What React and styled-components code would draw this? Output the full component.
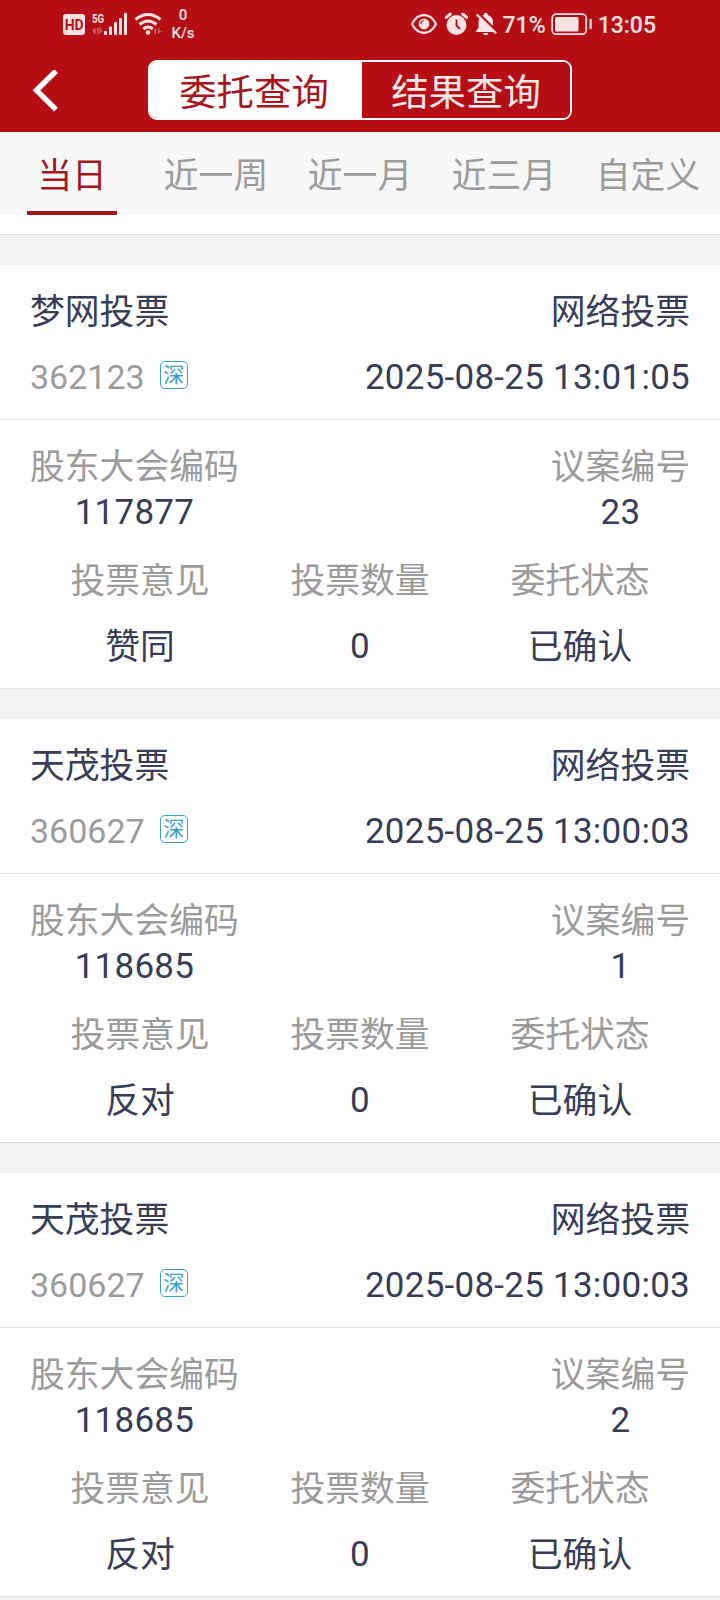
import React from 'react';
import styled, { createGlobalStyle } from 'styled-components';

const GlobalStyle = createGlobalStyle`
  * {
    box-sizing: border-box;
  }

  body {
    margin: 0;
    background: #fff;
    font-family: Roboto, 'Noto Sans CJK SC', sans-serif;
  }
`;

const Screen = styled.div`
  width: 720px;
  height: 1600px;
  overflow: hidden;
  background: #fff;
`;

const Header = styled.header`
  height: 132px;
  background: #b50f15;
`;

const StatusBar = styled.div`
  display: flex;
  justify-content: space-between;
  height: 50px;
  padding: 0 64px 0 63px;
  color: #fbe3e4;

  svg {
    display: block;
    flex: none;
  }
`;

const StatusGroup = styled.div`
  display: flex;
  align-items: center;
  gap: ${({ $gap }) => $gap}px;
  height: 48px;
`;

const HdBadge = styled.span`
  width: 22px;
  height: 21px;
  border-radius: 3px;
  background: #fbe3e4;
  color: #b50f15;
  font-size: 14px;
  font-weight: 700;
  line-height: 22px;
  text-align: center;
  letter-spacing: -0.3px;
`;

const Speed = styled.div`
  width: 28px;
  font-size: 15px;
  font-weight: 500;
  line-height: 18px;
  text-align: center;
`;

const StatusText = styled.span`
  font-size: 23px;
  font-weight: 500;
  line-height: 46px;
  padding-top: 3px;
`;

const NavBar = styled.div`
  display: flex;
  height: 82px;
  padding: 10px 0 0 32px;
`;

const BackButton = styled.button`
  display: flex;
  width: 116px;
  height: 60px;
  padding: 10px 0 0;
  border: 0;
  background: none;
`;

const Segment = styled.div`
  display: flex;
  width: 424px;
  height: 60px;
  overflow: hidden;
  border: 2px solid #fff;
  border-radius: 9px;
`;

const SegmentItem = styled.div`
  width: ${({ $active }) => ($active ? 212 : 208)}px;
  padding-right: ${({ $active }) => ($active ? 4 : 0)}px;
  background: ${({ $active }) => ($active ? '#fff' : '#b50f15')};
  color: ${({ $active }) => ($active ? '#a8161c' : '#fbe8e8')};
  font-size: 37.4px;
  line-height: 62px;
  text-align: center;
`;

const Tabs = styled.nav`
  display: flex;
  height: 83px;
  background: #f7f7f7;
`;

const Tab = styled.div`
  display: flex;
  flex-direction: column;
  align-items: center;
  width: 144px;
  color: ${({ $active }) => ($active ? '#9f181f' : '#9b9b9b')};
  font-size: 34.8px;
  line-height: 89px;

  &::after {
    content: '';
    width: 90px;
    height: 4px;
    margin-top: -10px;
    background: ${({ $active }) => ($active ? '#9f181f' : 'transparent')};
  }
`;

const List = styled.main`
  padding-top: 19px;
`;

const Card = styled.section`
  height: 454px;
  border-top: 1px solid #e2e2e2;
  color: #373d56;
  font-size: 34.8px;

  &::before {
    content: '';
    display: block;
    height: 30px;
    background: #f1f1f1;
  }
`;

const CardHead = styled.div`
  height: 155px;
  padding: 14px 30px 0;
  border-bottom: 1px solid #e0e0e0;
`;

const Row = styled.div`
  display: flex;
  justify-content: space-between;
  height: 66px;
  line-height: 66px;
`;

const Code = styled.span`
  display: flex;
  align-items: center;
  height: 64px;
  color: #9b9b9b;
  font-size: 34px;
  line-height: 64px;
`;

const Market = styled.span`
  width: 28px;
  height: 28px;
  margin: -4px 0 0 15px;
  border: 1px solid #3a9fcb;
  border-radius: 5px;
  color: #3a9fcb;
  font-size: 21px;
  line-height: 27px;
  text-align: center;
`;

const Time = styled.span`
  font-size: 35px;
  letter-spacing: 0.25px;
`;

const CardBody = styled.div`
  padding: 24px 30px 0;
`;

const Pair = styled.div`
  display: flex;
  justify-content: space-between;
  height: 92px;
  margin-bottom: 12px;
  line-height: 46px;
  text-align: center;
`;

const Columns = styled.div`
  display: grid;
  grid-template-columns: repeat(3, 1fr);
  grid-auto-rows: 66px;
  line-height: 66px;
  text-align: center;
`;

const Label = styled.div`
  color: #9b9b9b;
`;

const Value = styled.div``;

const NumberValue = styled(Value)`
  font-size: 35px;
  letter-spacing: 0.25px;
`;

const tabs = ['当日', '近一周', '近一月', '近三月', '自定义'];

const votes = [
  {
    name: '梦网投票',
    code: '362123',
    time: '2025-08-25 13:01:05',
    meeting: '117877',
    proposal: '23',
    opinion: '赞同',
  },
  {
    name: '天茂投票',
    code: '360627',
    time: '2025-08-25 13:00:03',
    meeting: '118685',
    proposal: '1',
    opinion: '反对',
  },
  {
    name: '天茂投票',
    code: '360627',
    time: '2025-08-25 13:00:03',
    meeting: '118685',
    proposal: '2',
    opinion: '反对',
  },
];

function SignalIcon() {
  return (
    <svg width="37" height="36" viewBox="91 6 37 36" fill="currentColor">
      <text x="92" y="23" fontSize="13.5" fontWeight="700" textLength="12" lengthAdjust="spacingAndGlyphs">
        5G
      </text>
      <path opacity=".4" d="M93.5 34v-3H92l3.5-3.5V34zM97 27.5h1.5V34H97zM99.5 27.5h1.5v3h2L99.5 34z" />
      <rect x="104" y="31" width="3" height="4" rx="1" />
      <rect x="109" y="26.5" width="3" height="8.5" rx="1" />
      <rect x="114" y="22" width="3" height="13" rx="1" />
      <rect x="119" y="18" width="3" height="17" rx="1" />
      <rect x="124" y="13" width="3" height="22" rx="1" />
    </svg>
  );
}

function WifiIcon() {
  return (
    <svg width="29" height="24" viewBox="133 12 29 24" fill="none" stroke="currentColor" strokeWidth="3">
      <path d="M134.5 19.5Q147 9.5 159.5 19.5M138.5 24.5Q147 17.5 155.5 24.5M142.3 29Q147 25 151.7 29" />
      <circle cx="147" cy="32.5" r="2.3" fill="currentColor" stroke="none" />
      <path
        fill="currentColor"
        stroke="none"
        opacity=".4"
        d="M153.5 34v-3H152l3-3v6zM157 28h1.5v3h2l-3.5 3z"
      />
    </svg>
  );
}

function EyeIcon() {
  return (
    <svg width="29" height="24" viewBox="409 12 29 24">
      <path
        d="M411 24C414 18 418 15.2 423 15.2S432 18 435 24C432 30 428 32.8 423 32.8S414 30 411 24Z"
        fill="none"
        stroke="currentColor"
        strokeWidth="2.2"
      />
      <circle cx="423" cy="24" r="5.4" fill="currentColor" />
      <path d="M419.8 23.5a3.5 3.5 0 0 1 3-3" fill="none" stroke="#b50f15" strokeWidth="1.2" />
    </svg>
  );
}

function AlarmIcon() {
  return (
    <svg width="26" height="24" viewBox="444 12 26 24">
      <circle cx="456.5" cy="25" r="10" fill="currentColor" />
      <path d="M446.3 17.3l4-3.3M466.7 17.3l-4-3.3" stroke="currentColor" strokeWidth="3" strokeLinecap="round" />
      <path d="M456.5 19.5v6l3.5 3.5" fill="none" stroke="#b50f15" strokeWidth="1.9" />
    </svg>
  );
}

function MuteIcon() {
  return (
    <svg width="23" height="24" viewBox="475 12 23 24" fill="currentColor">
      <path d="M476 32v-1.5l2.5-2.5v-6q0-5.5 5.3-6.7v-.5a2 2 0 0 1 4 0v.5Q493 16.5 493 22v6l2.5 2.5V32z" />
      <path d="M483 33h5.5q-.5 2.2-2.7 2.2T483 33z" />
      <path d="M477.5 12.5l20.5 20" stroke="#b50f15" strokeWidth="2.4" />
      <path d="M476.7 14.5l19.5 19" stroke="currentColor" strokeWidth="2.2" />
    </svg>
  );
}

function BatteryIcon() {
  return (
    <svg width="42" height="24" viewBox="550 12 42 24" fill="none" stroke="currentColor">
      <rect x="551.2" y="14.2" width="34" height="20" rx="4" strokeWidth="1.7" />
      <rect x="554" y="17" width="23.5" height="14.5" rx="1.5" fill="currentColor" stroke="none" />
      <path d="M589.6 19v10" strokeWidth="2.2" />
    </svg>
  );
}

function VoteCard({ vote }) {
  return (
    <Card>
      <CardHead>
        <Row>
          <span>{vote.name}</span>
          <span>网络投票</span>
        </Row>
        <Row>
          <Code>
            {vote.code}
            <Market>深</Market>
          </Code>
          <Time>{vote.time}</Time>
        </Row>
      </CardHead>
      <CardBody>
        <Pair>
          <div>
            <Label>股东大会编码</Label>
            <NumberValue>{vote.meeting}</NumberValue>
          </div>
          <div>
            <Label>议案编号</Label>
            <NumberValue>{vote.proposal}</NumberValue>
          </div>
        </Pair>
        <Columns>
          <Label>投票意见</Label>
          <Label>投票数量</Label>
          <Label>委托状态</Label>
          <Value>{vote.opinion}</Value>
          <NumberValue>0</NumberValue>
          <Value>已确认</Value>
        </Columns>
      </CardBody>
    </Card>
  );
}

function App() {
  return (
    <Screen>
      <GlobalStyle />
      <Header>
        <StatusBar>
          <StatusGroup $gap={6}>
            <HdBadge>HD</HdBadge>
            <SignalIcon />
            <WifiIcon />
            <Speed>
              <div>0</div>
              <div>K/s</div>
            </Speed>
          </StatusGroup>
          <StatusGroup $gap={5}>
            <EyeIcon />
            <AlarmIcon />
            <MuteIcon />
            <StatusText>71%</StatusText>
            <BatteryIcon />
            <StatusText>13:05</StatusText>
          </StatusGroup>
        </StatusBar>
        <NavBar>
          <BackButton aria-label="返回">
            <svg width="28" height="42" viewBox="0 0 28 42" fill="none" stroke="#fff" strokeWidth="5.4">
              <path d="M24 1L4.5 20.3L24 39.6" />
            </svg>
          </BackButton>
          <Segment>
            <SegmentItem $active>委托查询</SegmentItem>
            <SegmentItem>结果查询</SegmentItem>
          </Segment>
        </NavBar>
      </Header>
      <Tabs>
        {tabs.map((tab, i) => (
          <Tab key={tab} $active={i === 0}>
            {tab}
          </Tab>
        ))}
      </Tabs>
      <List>
        {votes.map((vote, i) => (
          <VoteCard key={i} vote={vote} />
        ))}
        <Card as="div" />
      </List>
    </Screen>
  );
}

export default App;
